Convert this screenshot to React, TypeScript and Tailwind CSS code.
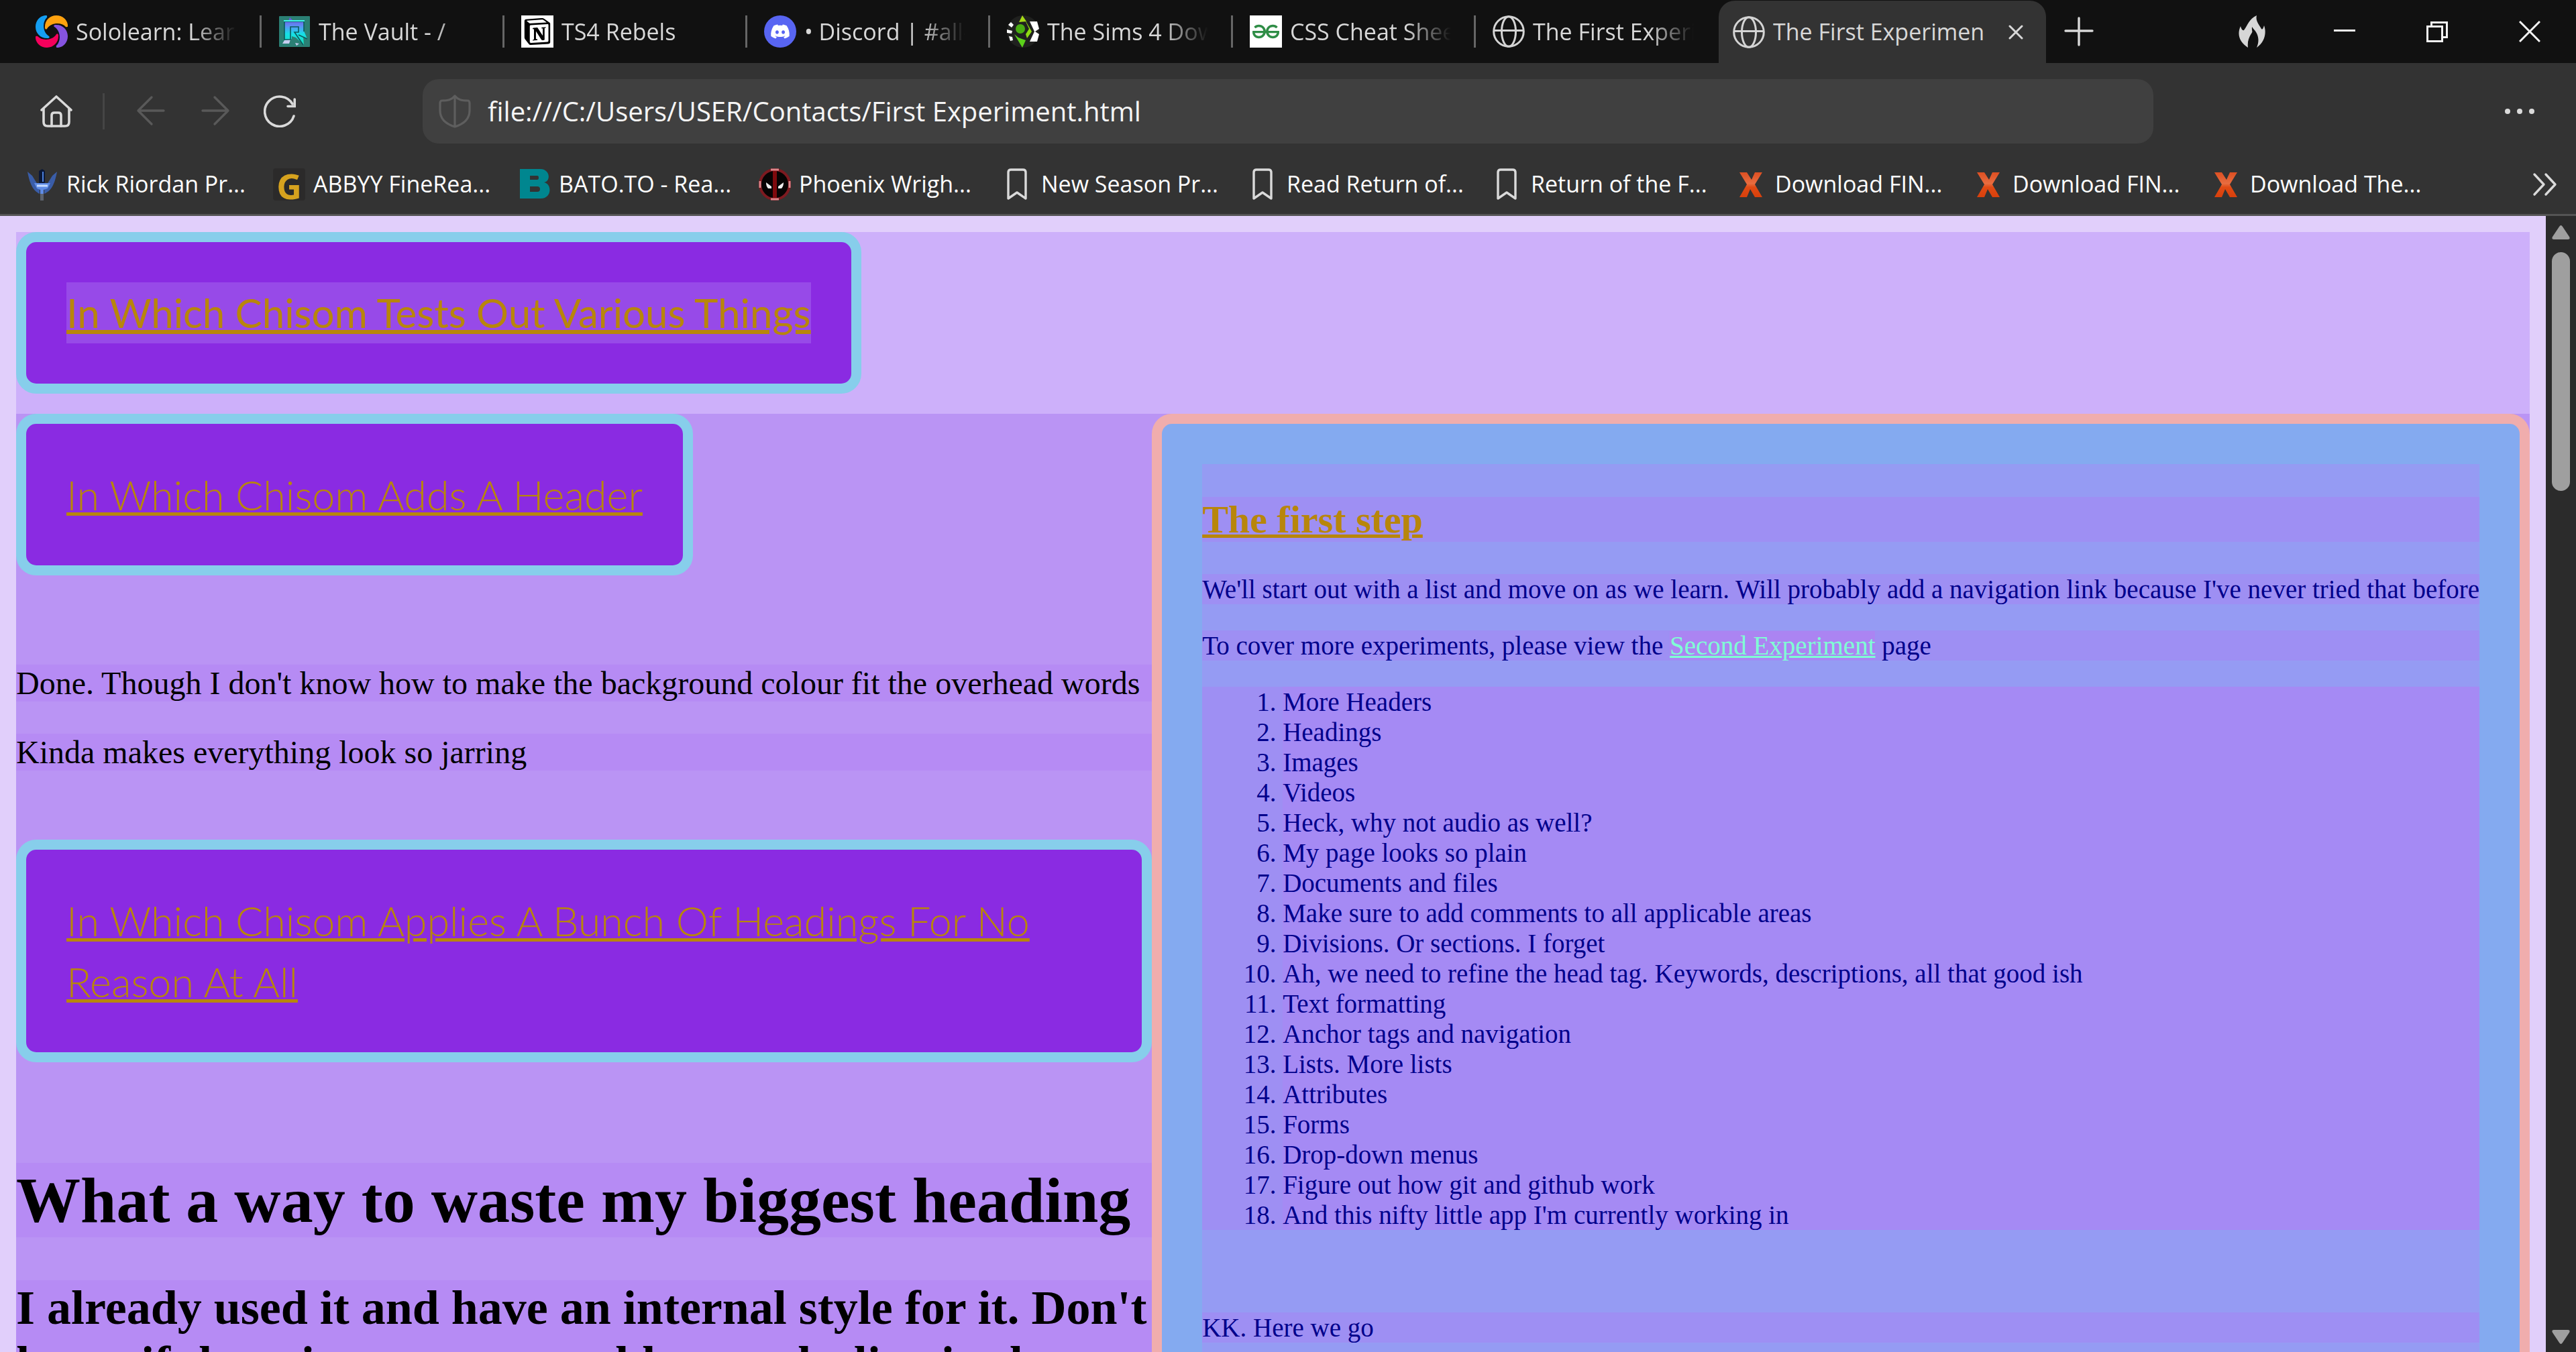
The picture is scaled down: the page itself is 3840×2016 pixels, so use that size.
import React from "react";
import { FaDiscord } from "react-icons/fa";
import { SiNotion, SiGeeksforgeeks } from "react-icons/si";

type IconProps = { className?: string };

function SololearnIcon() {
  const blade = "M14 0 Q18 -1 17 3 C10 9 10 25 20 31 Q22 33 19 34 C8 35 0 27 0 17 C0 8 6 1 14 0Z";
  return (
    <svg viewBox="0 0 48 48" className="size-12 shrink-0" aria-hidden="true">
      <path d={blade} fill="#149ef2" />
      <path d={blade} fill="#ffa20f" transform="rotate(90 24 24)" />
      <path d={blade} fill="#8553e0" transform="rotate(180 24 24)" />
      <path d={blade} fill="#f5005c" transform="rotate(270 24 24)" />
    </svg>
  );
}

function VaultIcon() {
  return (
    <svg viewBox="0 0 48 48" className="size-12 shrink-0" aria-hidden="true">
      <defs>
        <linearGradient id="vault" x1="0" y1="0" x2="0" y2="1">
          <stop offset="0" stopColor="#6d4fd8" />
          <stop offset="0.3" stopColor="#5f8cf5" />
          <stop offset="0.6" stopColor="#16e0e6" />
          <stop offset="1" stopColor="#17dfb9" />
        </linearGradient>
      </defs>
      <rect x="1" y="1" width="46" height="46" rx="1" fill="#2b7f74" />
      <path d="M6 42 L12 32 L18 36 L16 42Z M25 41 l6 1 -4 3z" fill="#c5cdf0" />
      <path d="M17 3 l5 5 h16 v15 l5 12 -6 -3 1 12 -12 -11 -6 -2 v4 l-11 2 V8 h6z" fill="url(#vault)" />
      <path d="M9 9 H38 V24 M9 9 V36 H18 V17 H30 V25 H24 L37 44 M30 29 L43 35" fill="none" stroke="#0b5a5c" strokeWidth="1.6" />
      <path d="M8 8 H39" stroke="#3cf5e8" strokeWidth="2" />
    </svg>
  );
}

function NotionIcon() {
  return (
    <span className="grid size-12 shrink-0 place-items-center bg-white text-black">
      <SiNotion className="size-10" aria-hidden="true" />
    </span>
  );
}

function DiscordIcon() {
  return (
    <span className="grid size-12 shrink-0 place-items-center rounded-full bg-[#5865f2] text-white">
      <FaDiscord className="size-[30px]" aria-hidden="true" />
    </span>
  );
}

function SimsIcon() {
  return (
    <svg viewBox="0 0 48 48" className="size-12 shrink-0" aria-hidden="true">
      <circle cx="24" cy="24" r="24" fill="#20211f" />
      <path d="M2 14 L6 10 L10 14 L7 18Z M0 21 L8 23 L7 27 L0 26Z M3 31 L8 32 L9 37 L5 38Z" fill="#fff" />
      <path d="M34 9 H45 L48 20 L42 24 L48 28 L45 39 H34 L41 24Z" fill="#fff" />
      <path d="M23 0 L29 9 L18 10Z" fill="#a5d916" />
      <path d="M25 3 L37 24 L30 34 L28 28 L33 20Z" fill="#8fdb12" />
      <path d="M11 28 L17 33 L28 37 L23 48Z" fill="#5bd11a" />
      <circle cx="20" cy="20" r="7" fill="#49ae12" />
    </svg>
  );
}

function GeeksIcon() {
  return (
    <span className="grid size-12 shrink-0 place-items-center bg-white text-[#2f8d46]">
      <SiGeeksforgeeks className="size-10" aria-hidden="true" />
    </span>
  );
}

function GlobeIcon() {
  return (
    <svg viewBox="0 0 48 48" className="size-12 shrink-0" fill="none" stroke="#d4d4d4" strokeWidth="3" aria-hidden="true">
      <circle cx="24" cy="24" r="22.3" />
      <ellipse cx="24" cy="24" rx="10.5" ry="22.3" />
      <path d="M2 22.5 H46" />
    </svg>
  );
}

function HomeIcon() {
  return (
    <svg viewBox="0 0 48 48" className="size-12" fill="none" stroke="#dadada" strokeWidth="3.6" strokeLinecap="round" strokeLinejoin="round" aria-hidden="true">
      <path d="M2 22 L24 2 L46 22" />
      <path d="M5 20 V40 Q5 46 11 46 H37 Q43 46 43 40 V20" />
      <path d="M17 46 V30 Q17 26 21 26 H27 Q31 26 31 30 V46" />
    </svg>
  );
}

function ArrowIcon({ className = "" }: IconProps) {
  return (
    <svg viewBox="0 0 48 48" className={`size-12 ${className}`} fill="none" stroke="#595959" strokeWidth="3.4" strokeLinecap="round" strokeLinejoin="round" aria-hidden="true">
      <path d="M25 3 L5 23 L25 43 M5 23 H43" />
    </svg>
  );
}

function RefreshIcon() {
  return (
    <svg viewBox="0 0 48 48" className="size-12" fill="none" stroke="#dadada" strokeWidth="3.6" strokeLinecap="round" aria-hidden="true">
      <path d="M45 31 A22.2 22.2 0 1 1 43 13" />
      <path d="M46.2 6 V16.5 H36" />
    </svg>
  );
}

function ShieldIcon() {
  return (
    <svg viewBox="0 0 48 50" className="h-[50px] w-12 shrink-0" fill="none" stroke="#5e5e5e" strokeWidth="3.2" strokeLinejoin="round" aria-hidden="true">
      <path d="M24 2 C19 8 14 9 5 9 Q2 9 2 13 V24 C2 36 11 44 24 48 C37 44 46 36 46 24 V13 Q46 9 43 9 C34 9 29 8 24 2Z M24 2 V48" />
    </svg>
  );
}

function FlameIcon() {
  return (
    <svg viewBox="0 0 40 48" className="h-12 w-10" fill="#d6d6d6" aria-hidden="true">
      <path d="M27 0 C25 8 30 13 34 20 C36 22 37 18 38 15 C42 26 39 40 27 48 C32 36 29 27 22 20 C22 26 12 32 14 48 C2 40 -3 29 3 16 C4 20 6 23 8 22 C14 14 15 6 27 0Z" />
      <path d="M20 17 C19 24 23 28 22 40 C26 34 27 26 20 17Z" fill="#111" />
    </svg>
  );
}

function TridentIcon() {
  return (
    <svg viewBox="0 0 48 48" className="size-12 shrink-0" aria-hidden="true">
      <path d="M2 5 L9 11 L17 24 L20 25 V38 C12 34 6 27 2 5Z M46 5 L39 11 L31 24 L27 25 V38 C36 34 42 27 46 5Z" fill="#3a5da8" />
      <path d="M12 22 H36 L32 30 L26 32 V39 H21 V32 L16 30Z" fill="#5f8ce6" />
      <path d="M19 4 L24 1 L28 4 V22 H19Z" fill="#0b1838" />
      <path d="M25 5 V20" stroke="#4c7fdc" strokeWidth="2" />
      <path d="M16 26 H32" stroke="#c7dcff" strokeWidth="3" />
      <path d="M23.5 38 V48" stroke="#5d636e" strokeWidth="5" />
    </svg>
  );
}

function AbbyyIcon() {
  return (
    <span className="grid size-12 shrink-0 place-items-center rounded-sm bg-[#2b2a2a] text-[52px] leading-none font-bold text-[#d6a21e]">G</span>
  );
}

function BatoIcon() {
  return (
    <svg viewBox="0 0 48 48" className="size-12 shrink-0" aria-hidden="true">
      <path fillRule="evenodd" d="M2 1 H32 C48 1 48 20 38 21 C50 23 50 45 33 45 H2Z M17 11 V17 H28 Q30 17 30 14 Q30 11 28 11Z M17 27 V35 H28 Q32 35 32 31 Q32 27 28 27Z" fill="#00868f" />
    </svg>
  );
}

function PhoenixIcon() {
  return (
    <svg viewBox="0 0 48 48" className="size-12 shrink-0" aria-hidden="true">
      <circle cx="24" cy="24" r="22" fill="#070404" stroke="#7d1a20" strokeWidth="4" />
      <path d="M24 3 V45" stroke="#7e0a0d" strokeWidth="6" />
      <path d="M18 2 H30 M18 46 H30 M2 19 V29 M46 19 V29" stroke="#dc868b" strokeWidth="3" />
      <path d="M11 21 L19 27 V30 H14 Q11 27 11 21Z M37 21 L29 27 V30 H34 Q37 27 37 21Z" fill="#eee" />
    </svg>
  );
}

function BookmarkIcon() {
  return (
    <svg viewBox="0 0 48 48" className="size-12 shrink-0" fill="none" stroke="#dadada" strokeWidth="3.4" strokeLinejoin="round" aria-hidden="true">
      <path d="M11 45 V6 Q11 2 15 2 H33 Q37 2 37 6 V45 L24 36Z" />
    </svg>
  );
}

function XIcon() {
  return (
    <svg viewBox="0 0 48 48" className="size-12 shrink-0" aria-hidden="true">
      <defs>
        <linearGradient id="xfill" x1="0" y1="0" x2="0" y2="1">
          <stop offset="0" stopColor="#dd4f22" />
          <stop offset="0.45" stopColor="#e86d40" />
          <stop offset="0.6" stopColor="#e04a14" />
          <stop offset="1" stopColor="#d8400c" />
        </linearGradient>
      </defs>
      <path d="M7 6 H18 L25 17 L30 6 H41 L30 24 L41 43 H30 L23 31 L18 43 H7 L18 24Z" fill="url(#xfill)" />
    </svg>
  );
}

const tabs = [
  { icon: <SololearnIcon />, title: "Sololearn: Learn" },
  { icon: <VaultIcon />, title: "The Vault - /" },
  { icon: <NotionIcon />, title: "TS4 Rebels" },
  { icon: <DiscordIcon />, title: "• Discord | #all-" },
  { icon: <SimsIcon />, title: "The Sims 4 Dow" },
  { icon: <GeeksIcon />, title: "CSS Cheat Shee" },
  { icon: <GlobeIcon />, title: "The First Experi" },
];

const bookmarks = [
  { icon: <TridentIcon />, label: "Rick Riordan Pr...", width: "w-[368px]" },
  { icon: <AbbyyIcon />, label: "ABBYY FineRea...", width: "w-[366px]" },
  { icon: <BatoIcon />, label: "BATO.TO - Rea...", width: "w-[358px]" },
  { icon: <PhoenixIcon />, label: "Phoenix Wrigh...", width: "w-[361px]" },
  { icon: <BookmarkIcon />, label: "New Season Pr...", width: "w-[366px]" },
  { icon: <BookmarkIcon />, label: "Read Return of...", width: "w-[364px]" },
  { icon: <BookmarkIcon />, label: "Return of the F...", width: "w-[364px]" },
  { icon: <XIcon />, label: "Download FIN...", width: "w-[354px]" },
  { icon: <XIcon />, label: "Download FIN...", width: "w-[354px]" },
  { icon: <XIcon />, label: "Download The...", width: "w-[354px]" },
];

const steps = [
  "More Headers",
  "Headings",
  "Images",
  "Videos",
  "Heck, why not audio as well?",
  "My page looks so plain",
  "Documents and files",
  "Make sure to add comments to all applicable areas",
  "Divisions. Or sections. I forget",
  "Ah, we need to refine the head tag. Keywords, descriptions, all that good ish",
  "Text formatting",
  "Anchor tags and navigation",
  "Lists. More lists",
  "Attributes",
  "Forms",
  "Drop-down menus",
  "Figure out how git and github work",
  "And this nifty little app I'm currently working in",
];

function TabStrip() {
  return (
    <div className="flex h-[94px] items-stretch bg-[#111111] pl-7 text-[34px] text-[#d8d8d8]">
      {tabs.map((tab, i) => (
        <button key={i} type="button" className="flex w-[362px] shrink-0 items-center pl-[25px] text-left">
          {tab.icon}
          <span className="ml-3 w-60 shrink-0 overflow-hidden whitespace-nowrap [mask-image:linear-gradient(to_right,black_72%,transparent)]">
            {tab.title}
          </span>
          {i < tabs.length - 1 && <span className="ml-auto h-12 w-[3px] bg-[#666666]" />}
        </button>
      ))}
      <div className="mt-px flex w-[488px] shrink-0 items-center rounded-t-3xl bg-[#333333] pr-6 pl-[21px]">
        <GlobeIcon />
        <span className="ml-3 w-[314px] overflow-hidden whitespace-nowrap">The First Experiment</span>
        <button type="button" aria-label="Close tab" className="ml-auto grid size-[42px] place-items-center">
          <svg viewBox="0 0 22 22" className="size-[22px]" stroke="#d8d8d8" strokeWidth="3" strokeLinecap="round" aria-hidden="true">
            <path d="M2 2 L20 20 M20 2 L2 20" />
          </svg>
        </button>
      </div>
      <button type="button" aria-label="New tab" className="ml-6 grid w-[50px] place-items-center">
        <svg viewBox="0 0 44 44" className="size-11" stroke="#d8d8d8" strokeWidth="3.4" strokeLinecap="round" aria-hidden="true">
          <path d="M22 2 V42 M2 21 H42" />
        </svg>
      </button>
      <div className="ml-auto flex">
        <button type="button" aria-label="Clear data" className="grid w-[138px] place-items-center"><FlameIcon /></button>
        <button type="button" aria-label="Minimize" className="grid w-[138px] place-items-center">
          <svg viewBox="0 0 32 32" className="size-8" stroke="#f2f2f2" strokeWidth="3" aria-hidden="true"><path d="M0 14.5 H32" /></svg>
        </button>
        <button type="button" aria-label="Restore" className="grid w-[138px] place-items-center">
          <svg viewBox="0 0 32 32" className="size-8" fill="none" stroke="#f2f2f2" strokeWidth="3" aria-hidden="true">
            <path d="M1.5 8.5 H23.5 V30.5 H1.5Z M7.5 8 V2.5 H30.5 V24.5 H24" />
          </svg>
        </button>
        <button type="button" aria-label="Close window" className="grid w-[138px] place-items-center">
          <svg viewBox="0 0 32 32" className="size-8" stroke="#f2f2f2" strokeWidth="3" aria-hidden="true"><path d="M1 1 L31 31 M31 1 L1 31" /></svg>
        </button>
      </div>
    </div>
  );
}

function Toolbar() {
  return (
    <div className="flex items-center bg-[#333333] px-[60px] pt-6 pb-4">
      <button type="button" aria-label="Home"><HomeIcon /></button>
      <span className="ml-[45px] h-[54px] w-[3px] bg-[#454545]" />
      <button type="button" aria-label="Back" className="ml-[45px]"><ArrowIcon /></button>
      <button type="button" aria-label="Forward" className="ml-12"><ArrowIcon className="-scale-x-100" /></button>
      <button type="button" aria-label="Refresh" className="ml-12"><RefreshIcon /></button>
      <label className="mr-[522px] ml-[189px] flex h-24 flex-1 items-center gap-[25px] rounded-3xl bg-[#404040] px-6">
        <ShieldIcon />
        <input
          type="text"
          aria-label="Address"
          defaultValue="file:///C:/Users/USER/Contacts/First Experiment.html"
          className="min-w-0 flex-1 bg-transparent text-[40px] text-[#f5f5f5] outline-none"
        />
      </label>
      <button type="button" aria-label="Menu">
        <svg viewBox="0 0 48 48" className="size-12" fill="#dadada" aria-hidden="true">
          <circle cx="6" cy="24" r="4" /><circle cx="24" cy="24" r="4" /><circle cx="42" cy="24" r="4" />
        </svg>
      </button>
    </div>
  );
}

function BookmarksBar() {
  return (
    <nav className="flex h-[92px] items-center border-b-3 border-[#545454] bg-[#333333] pr-[27px] pl-[39px] text-[34px] text-white">
      {bookmarks.map((b, i) => (
        <a key={i} href="#" className={`flex shrink-0 items-center gap-3 whitespace-nowrap ${b.width}`}>
          {b.icon}
          {b.label}
        </a>
      ))}
      <button type="button" aria-label="More bookmarks" className="ml-auto">
        <svg viewBox="0 0 38 36" className="h-9 w-[38px]" fill="none" stroke="#dadada" strokeWidth="3.4" strokeLinecap="round" strokeLinejoin="round" aria-hidden="true">
          <path d="M3 3 L17 18 L3 33 M20 3 L34 18 L20 33" />
        </svg>
      </button>
    </nav>
  );
}

function Banner({ children, className = "" }: { children: React.ReactNode; className?: string }) {
  return (
    <h1 className={`w-fit rounded-[30px] border-15 border-[#87ceeb] bg-[#8a2be2] p-15 font-['Papyrus','Lato',sans-serif] leading-[91px] text-[#b8860b] underline decoration-[5px] ${className}`}>
      {children}
    </h1>
  );
}

function Article() {
  return (
    <section className="min-w-0 flex-1 text-black">
      <Banner className="text-[61px] font-light">In Which Chisom Adds A Header</Banner>
      <p className="mt-[133px] bg-[#b68bf4] text-5xl leading-[55px]">
        Done. Though I don't know how to make the background colour fit the overhead words
      </p>
      <p className="mt-12 bg-[#b68bf4] text-5xl leading-[55px]">Kinda makes everything look so jarring</p>
      <Banner className="mt-[103px] text-[61px] font-light">
        In Which Chisom Applies A Bunch Of Headings For No Reason At All
      </Banner>
      <h1 className="mt-[150px] bg-[#b68bf4] text-8xl leading-[111px] font-bold">What a way to waste my biggest heading</h1>
      <h2 className="mt-16 bg-[#b68bf4] text-7xl leading-[83px] font-bold">
        I already used it and have an internal style for it. Don't know if there is a means to add an underline in the
      </h2>
    </section>
  );
}

function Aside() {
  return (
    <aside className="shrink-0 rounded-[30px] border-15 border-[#f0adad] bg-[#84aaf0] p-15 text-[39px] leading-[45px] whitespace-nowrap text-[#00008b]">
      <div className="h-full bg-[#959bf3] pt-[49px]">
        <h2 className="bg-[#9e8ff3] text-[58px] leading-[67px] font-bold text-[#b8860b] underline decoration-[5px]">The first step</h2>
        <p className="mt-12 bg-[#9e8ff3]">
          We'll start out with a list and move on as we learn. Will probably add a navigation link because I've never tried that before
        </p>
        <p className="mt-[39px] bg-[#9e8ff3]">
          To cover more experiments, please view the{" "}
          <a href="#" className="bg-[#ab84f2] text-[#7fffd4] underline">Second Experiment</a> page
        </p>
        <ol className="mt-[39px] list-decimal bg-[#9e8ff3] pl-30">
          {steps.map((s) => (
            <li key={s} className="bg-[#a58af4]">{s}</li>
          ))}
        </ol>
        <p className="mt-[123px] bg-[#9e8ff3]">KK. Here we go</p>
      </div>
    </aside>
  );
}

function Scrollbar() {
  return (
    <div className="flex w-[45px] shrink-0 flex-col items-center bg-[#2b2b2b] pt-[14px] pb-3" aria-hidden="true">
      <svg viewBox="0 0 27 21" className="h-[21px] w-[27px]" fill="#9f9f9f"><path d="M11 2 Q13.5 -2 16 2 L26 17 Q28 21 24 21 H3 Q-1 21 1 17Z" /></svg>
      <div className="mt-[19px] h-[356px] w-[27px] rounded-full bg-[#9f9f9f]" />
      <svg viewBox="0 0 27 21" className="mt-auto h-[21px] w-[27px]" fill="#9f9f9f"><path d="M11 19 Q13.5 23 16 19 L26 4 Q28 0 24 0 H3 Q-1 0 1 4Z" /></svg>
    </div>
  );
}

export default function App() {
  return (
    <div className="flex h-screen flex-col overflow-hidden font-['Segoe_UI','Open_Sans',sans-serif]">
      <header>
        <TabStrip />
        <Toolbar />
        <BookmarksBar />
      </header>
      <div className="flex min-h-0 flex-1">
        <main className="min-w-0 flex-1 overflow-hidden bg-[#e1cffb] p-6 pb-0 font-['Liberation_Serif','Times_New_Roman',serif]">
          <div className="bg-[#cdb0fa] pb-[30px]">
            <Banner className="text-[60px] font-normal">
              <span className="inline-block bg-[#974ae8] underline">In Which Chisom Tests Out Various Things</span>
            </Banner>
          </div>
          <div className="flex min-h-full bg-[#ba94f4]">
            <Article />
            <Aside />
          </div>
        </main>
        <Scrollbar />
      </div>
    </div>
  );
}
